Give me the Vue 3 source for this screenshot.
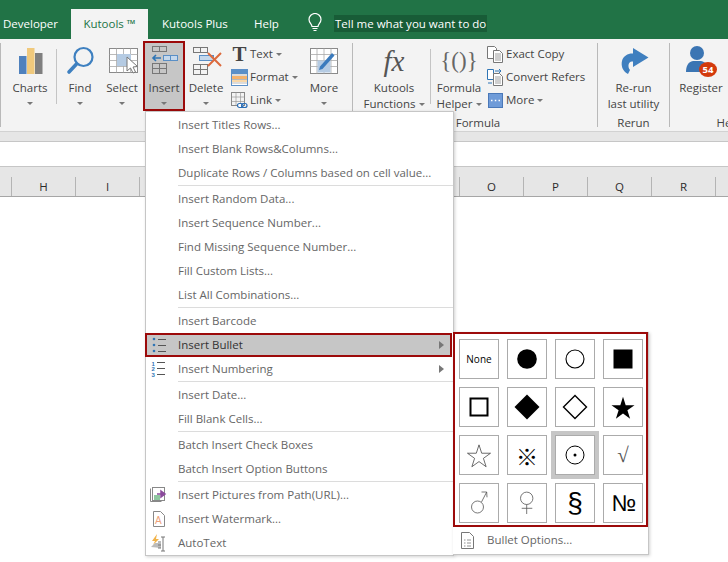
<template>
  <div class="page">
    <div class="titlebar">
      <span class="tab dev">Developer</span>
      <span class="tab active">Kutools ™</span>
      <span class="tab plus">Kutools Plus</span>
      <span class="tab help">Help</span>
      <svg class="bulb" width="16" height="20" viewBox="0 0 16 20" fill="none" stroke="#fff" stroke-width="1.2">
        <path d="M5 13.5C5 11 2 10 2 6.5a6 6 0 0 1 12 0C14 10 11 11 11 13.5z" />
        <path d="M5.5 15.5h5M6.5 17.5h3" />
      </svg>
      <span class="tell">Tell me what you want to do</span>
    </div>

    <div class="ribbon">
      <div class="group g-first">
        <div class="group-row">
          <div class="btn w-charts">
            <svg class="ic" width="26" height="30" viewBox="0 0 26 30">
              <rect x="2" y="11" width="7.5" height="18" fill="#4f81bd" />
              <rect x="10" y="3" width="7.5" height="26" fill="#f0c97c" />
              <rect x="18" y="8" width="7.5" height="21" fill="#7f7f7f" />
            </svg>
            <span class="lbl">Charts</span>
            <i class="caret"></i>
          </div>
          <div class="short-sep"></div>
          <div class="btn w-find">
            <svg class="ic" width="30" height="30" viewBox="0 0 30 30" fill="none">
              <circle cx="18.500" cy="12" r="9" stroke="#3e80c0" stroke-width="2.200" />
              <path d="M11.500 19 4 27" stroke="#3e80c0" stroke-width="3.600" stroke-linecap="round" />
            </svg>
            <span class="lbl">Find</span>
            <i class="caret"></i>
          </div>
          <div class="btn w-select">
            <svg class="ic" width="34" height="30" viewBox="0 0 34 30">
              <rect x="4.500" y="3.500" width="28" height="24" fill="#fff" stroke="#8a8a8a" />
              <path d="M4.500 9.500h28M4.500 15.500h28M4.500 21.500h28M11.500 3.500v24M18.500 3.500v24M25.500 3.500v24" stroke="#a8a8a8" stroke-width=".8" />
              <rect x="12" y="9" width="14" height="12" fill="#b5cbe3" />
              <path d="M22 12v14l3.500-3 2.500 5 2.500-1-2.500-5 4.500-.5z" fill="#fff" stroke="#777" />
            </svg>
            <span class="lbl">Select</span>
            <i class="caret"></i>
          </div>
          <div class="btn w-insert picked">
            <svg class="ic" width="30" height="30" viewBox="0 0 30 30" fill="none" stroke="#777">
              <rect x="3.500" y="1.500" width="14" height="5" />
              <path d="M10.500 1.500v5" />
              <rect x="14.500" y="10.500" width="14" height="5" stroke="#5a8fc6" fill="#c5d8ec" />
              <path d="M21.500 10.500v5" stroke="#5a8fc6" />
              <path d="M12 13H4M7 10l-3 3 3 3" stroke="#2f75b5" stroke-width="1.600" />
              <rect x="3.500" y="18.500" width="14" height="10" />
              <path d="M10.500 18.500v10M3.500 23.500h14" />
            </svg>
            <span class="lbl">Insert</span>
            <i class="caret"></i>
          </div>
          <div class="btn w-delete">
            <svg class="ic" width="32" height="30" viewBox="0 0 32 30" fill="none" stroke="#777">
              <rect x="3.500" y="2.500" width="14" height="5" />
              <path d="M10.500 2.500v5" />
              <rect x="9.500" y="10.500" width="14" height="5" stroke="#5a8fc6" fill="#c5d8ec" />
              <rect x="3.500" y="19.500" width="14" height="10" />
              <path d="M10.500 19.500v10M3.500 24.500h14" />
              <path d="M18 8l13 13M31 8 18 21" stroke="#dc6a3c" stroke-width="2" />
            </svg>
            <span class="lbl">Delete</span>
            <i class="caret"></i>
          </div>
          <div class="stack s-text">
            <div class="stack-row">
              <span class="t-icon">T</span>
              <span class="lbl">Text</span><i class="caret inline"></i>
            </div>
            <div class="stack-row">
              <svg class="sic" width="17" height="17" viewBox="0 0 17 17">
                <rect x=".5" y=".5" width="16" height="16" fill="#fff" stroke="#5b8fc7" />
                <rect x="1" y="1" width="15" height="4" fill="#5b8fc7" />
                <rect x="1" y="7" width="15" height="3" fill="#f5b26b" />
                <rect x="1" y="11" width="15" height="2" fill="#f8d7a8" />
                <path d="M1 6h15M1 10.500h15M1 14h15" stroke="#888" stroke-width=".6" />
              </svg>
              <span class="lbl">Format</span><i class="caret inline"></i>
            </div>
            <div class="stack-row">
              <svg class="sic" width="17" height="17" viewBox="0 0 17 17" fill="none">
                <rect x=".5" y=".5" width="13" height="13" stroke="#888" />
                <path d="M.5 5h13M.5 9.500h13M5 .5v13M9.500 .5v13" stroke="#999" stroke-width=".7" />
                <rect x="6.500" y="11.500" width="5.500" height="4" rx="2" stroke="#2a6db5" stroke-width="1.200" fill="#fff" />
                <rect x="10.500" y="11.500" width="5.500" height="4" rx="2" stroke="#2a6db5" stroke-width="1.200" />
              </svg>
              <span class="lbl">Link</span><i class="caret inline"></i>
            </div>
          </div>
          <div class="btn w-more">
            <svg class="ic" width="30" height="30" viewBox="0 0 30 30">
              <rect x="1.500" y="3.500" width="27" height="25" fill="#fff" stroke="#8a8a8a" />
              <path d="M1.500 9.500h27M1.500 15.500h27M1.500 21.500h27M8 3.500v25M15 3.500v25M22 3.500v25" stroke="#aaa" stroke-width=".8" />
              <rect x="8.500" y="15.500" width="13" height="12" fill="#b5cbe3" />
              <path d="M11 21.500 23 8l2.500 2.500L13.500 24l-3.500 1z" fill="#3a7abd" />
            </svg>
            <span class="lbl">More</span>
            <i class="caret"></i>
          </div>
        </div>
      </div>

      <div class="group g-formula">
        <div class="group-row">
          <div class="btn w-fx">
            <span class="fx">fx</span>
            <span class="lbl">Kutools</span>
            <span class="lbl">Functions<i class="caret inline"></i></span>
          </div>
          <div class="short-sep near"></div>
          <div class="btn w-helper">
            <span class="braces">{()}</span>
            <span class="lbl">Formula</span>
            <span class="lbl">Helper<i class="caret inline"></i></span>
          </div>
          <div class="stack s-copy">
            <div class="stack-row">
              <svg class="sic" width="17" height="17" viewBox="0 0 17 17" fill="#fff" stroke="#777">
                <path d="M.5.500h7l2 2v10h-9z" />
                <path d="M6.500 4.500h6l3 3v9h-9z" />
                <path d="M8 8h6M8 10h6M8 12h6M8 14h6" stroke-width=".7" />
              </svg>
              <span class="lbl">Exact Copy</span>
            </div>
            <div class="stack-row">
              <svg class="sic" width="17" height="17" viewBox="0 0 17 17" fill="#fff" stroke="#777">
                <path d="M.5.500h6v10h-6z" stroke="#2f75b5" />
                <path d="M6.500 4.500h6l3 3v9h-9z" />
                <path d="M8 8h6M8 10h6M8 12h6M8 14h6" stroke-width=".7" />
                <path d="M8 2h6M12 0l2 2-2 2M1 14h4" stroke="#2f75b5" fill="none" />
              </svg>
              <span class="lbl">Convert Refers</span>
            </div>
            <div class="stack-row">
              <svg class="sic dots" width="15" height="15" viewBox="0 0 15 15">
                <rect x=".5" y=".5" width="14" height="14" fill="#6f9bd8" stroke="#4a78b8" />
                <path d="M3 7.500h1.500M6.800 7.500h1.500M10.500 7.500H12" stroke="#fff" stroke-width="1.500" />
              </svg>
              <span class="lbl">More</span><i class="caret inline"></i>
            </div>
          </div>
        </div>
        <div class="group-label">Formula</div>
      </div>

      <div class="group g-rerun">
        <div class="group-row">
          <div class="btn w-rerun">
            <svg class="ic" width="30" height="30" viewBox="0 0 30 30">
              <path d="M14 3 29.500 12.500 14 22v-5.500h-1c-4 0-4.500 5.500-2 8.500l-2 4C3 26 2 20 3 16c1-5 6-7.500 10-7.500h1z" fill="#3f7fbf" />
            </svg>
            <span class="lbl">Re-run</span>
            <span class="lbl">last utility</span>
          </div>
        </div>
        <div class="group-label">Rerun</div>
      </div>

      <div class="group g-help">
        <div class="group-row">
          <div class="btn w-register">
            <div class="reg-icon">
              <svg width="26" height="28" viewBox="0 0 26 28">
                <circle cx="12" cy="8" r="7" fill="#3b75b3" />
                <path d="M1 27c0-6 2-10 7-11h8c5 1 7 5 7 11z" fill="#3b75b3" />
              </svg>
              <span class="badge">54</span>
            </div>
            <span class="lbl">Register</span>
          </div>
        </div>
        <div class="group-label">Help</div>
      </div>
    </div>

    <div class="formula-gap"></div>
    <div class="formula-line"></div>

    <div class="headers">
      <span v-for="(c, i) in columns" :key="i" class="col">{{ c }}</span>
    </div>

    <div class="menu">
      <template v-for="(item, i) in menuItems" :key="i">
        <div v-if="item.sep" class="menu-sep"></div>
        <div v-else class="menu-row" :class="{ hot: item.hot, second: item.arrow && !item.hot }">
          <span class="menu-ic">
            <svg v-if="item.icon === 'bullet'" width="16" height="16" viewBox="0 0 16 16">
              <circle cx="2" cy="2" r="1.300" fill="#2f75b5" />
              <circle cx="2" cy="8" r="1.300" fill="#2f75b5" />
              <circle cx="2" cy="14" r="1.300" fill="#2f75b5" />
              <path d="M6 2.500h8M6 8.500h8M6 14.500h8" stroke="#555" />
            </svg>
            <svg v-else-if="item.icon === 'number'" width="16" height="16" viewBox="0 0 16 16">
              <g fill="#2f75b5" font-family="Liberation Sans, sans-serif" font-size="6" font-weight="700">
                <text x=".5" y="4.500">1</text>
                <text x=".5" y="10.300">2</text>
                <text x=".5" y="15.800">3</text>
              </g>
              <path d="M6 1.500h8M6 7.500h8M6 13.500h8" stroke="#555" />
            </svg>
            <svg v-else-if="item.icon === 'pic'" width="18" height="16" viewBox="0 0 18 16" fill="none">
              <path d="M.5 1.500v13h11" stroke="#888" />
              <rect x="2.500" y=".5" width="12" height="13" fill="#fff" stroke="#888" />
              <rect x="4" y="8" width="6" height="5" fill="#8fc7a0" />
              <path d="M7 7h7M11 4l4 3-4 3z" stroke="#8b4a9c" fill="#8b4a9c" stroke-width="1.500" />
            </svg>
            <svg v-else-if="item.icon === 'mark'" width="14" height="16" viewBox="0 0 14 16" fill="none">
              <path d="M1.500.5h7l4 4v11h-11z" fill="#fff" stroke="#888" />
              <text x="3" y="13" fill="#eea27a" font-family="Liberation Sans, sans-serif" font-size="10">A</text>
            </svg>
            <svg v-else-if="item.icon === 'auto'" width="18" height="18" viewBox="0 0 18 18" fill="none">
              <path d="M7 0 2 7h3L3 11l6-6H6z" fill="#f1b34a" />
              <path d="M1 13 5 9h6v5z" fill="#bbb" />
              <path d="M13 3v14M11 3h4M11 17h4M8 8h3M8 11h3M8 14h3" stroke="#777" />
            </svg>
          </span>
          <span class="menu-text">{{ item.text }}</span>
          <i v-if="item.arrow" class="sub-arrow"></i>
        </div>
      </template>
    </div>

    <div class="submenu">
      <div class="symbols">
        <div v-for="s in symbols" :key="s.id" class="cell" :class="{ on: s.id === 'dot' }">
          <span v-if="s.text" :class="s.cls">{{ s.text }}</span>
          <svg v-else width="36" height="36" viewBox="0 0 36 36" v-html="s.svg"></svg>
        </div>
      </div>
      <div class="sub-foot">
        <svg width="13" height="17" viewBox="0 0 13 17" fill="none" stroke="#777">
          <path d="M.5.500h8l4 4v12H.5z" fill="#fff" />
          <path d="M3 8h1.500M6 8h4M3 11h1.500M6 11h4M3 14h1.500M6 14h4" stroke-width=".8" />
        </svg>
        <span class="foot-text">Bullet Options...</span>
      </div>
    </div>
  </div>
</template>

<script setup>
// J to N lie behind the open menu
const columns = ['', 'H', 'I', '', '', '', '', '', 'O', 'P', 'Q', 'R']

const menuItems = [
  { text: 'Insert Titles Rows...' },
  { text: 'Insert Blank Rows&Columns...' },
  { text: 'Duplicate Rows / Columns based on cell value...' },
  { sep: true },
  { text: 'Insert Random Data...' },
  { text: 'Insert Sequence Number...' },
  { text: 'Find Missing Sequence Number...' },
  { text: 'Fill Custom Lists...' },
  { text: 'List All Combinations...' },
  { sep: true },
  { text: 'Insert Barcode' },
  { text: 'Insert Bullet', icon: 'bullet', arrow: true, hot: true },
  { text: 'Insert Numbering', icon: 'number', arrow: true },
  { sep: true },
  { text: 'Insert Date...' },
  { text: 'Fill Blank Cells...' },
  { sep: true },
  { text: 'Batch Insert Check Boxes' },
  { text: 'Batch Insert Option Buttons' },
  { sep: true },
  { text: 'Insert Pictures from Path(URL)...', icon: 'pic' },
  { text: 'Insert Watermark...', icon: 'mark' },
  { text: 'AutoText', icon: 'auto' },
]

const starPath = 'M18 6.500l3 9.300h9.800l-7.900 5.700 3 9.300-7.900-5.700-7.900 5.700 3-9.300-7.900-5.700H15z'

const symbols = [
  { id: 'none', text: 'None', cls: 'sym-none' },
  { id: 'disc', svg: '<circle cx="18" cy="18" r="9.800" fill="#000"/>' },
  { id: 'circle', svg: '<circle cx="18" cy="18" r="9" fill="none" stroke="#000" stroke-width="1.100"/>' },
  { id: 'square', svg: '<rect x="8.500" y="8.500" width="19" height="19" fill="#000"/>' },
  { id: 'box', svg: '<rect x="9.500" y="9.500" width="17" height="17" fill="none" stroke="#000" stroke-width="2"/>' },
  { id: 'diamond', svg: '<path d="M18 5.500 30.500 18 18 30.500 5.500 18z" fill="#000"/>' },
  { id: 'lozenge', svg: '<path d="M18 6.500 29.500 18 18 29.500 6.500 18z" fill="none" stroke="#000" stroke-width="1.400"/>' },
  { id: 'star', svg: `<path transform="translate(1.800 2) scale(.9)" d="${starPath}" fill="#000"/>` },
  { id: 'star-o', svg: `<path transform="translate(1.800 2) scale(.9)" d="${starPath}" fill="none" stroke="#333" stroke-width=".8"/>` },
  { id: 'ref', text: '※', cls: 'sym-ref' },
  { id: 'dot', svg: '<circle cx="18" cy="18" r="9" fill="none" stroke="#000" stroke-width="1"/><circle cx="18" cy="18" r="1.500" fill="#000"/>' },
  { id: 'root', text: '√', cls: 'sym-root' },
  { id: 'male', svg: '<circle cx="16.500" cy="22" r="6" fill="none" stroke="#555" stroke-width=".8"/><path d="M20.500 17 25.700 7M20.500 7h5.200l.3 5.300" fill="none" stroke="#555" stroke-width=".8"/>' },
  { id: 'female', svg: '<circle cx="17.700" cy="13.300" r="6.200" fill="none" stroke="#555" stroke-width=".8"/><path d="M17.700 19.500V29M12.700 23.300h10.600" fill="none" stroke="#555" stroke-width=".8"/>' },
  { id: 'section', text: '§', cls: 'sym-sec' },
  { id: 'numero', text: '№', cls: 'sym-num' },
]
</script>

<style>
html, body {
  margin: 0;
  background: #fff;
  overflow: hidden;
}
</style>

<style scoped>
.page {
  position: relative;
  width: 728px;
  height: 562px;
  overflow: hidden;
  background: #fff;
  font-family: "Open Sans", "Noto Sans", sans-serif;
  font-size: 11.5px;
  color: #444;
}

/* title bar */
.titlebar {
  height: 39px;
  background: #217346;
  display: flex;
  align-items: flex-end;
  color: #fff;
  font-size: 11.5px;
}
.tab {
  height: 30px;
  line-height: 30px;
  box-sizing: border-box;
}
.dev { width: 71px; padding-left: 3px; }
.active {
  width: 77px;
  background: #f3f3f3;
  color: #217346;
  text-align: center;
}
.plus { margin-left: 14px; width: 92px; }
.help { width: 53px; }
.bulb { margin-bottom: 6px; }
.tell {
  margin: 0 0 7px 11px;
  padding: 0 1px;
  height: 17px;
  line-height: 17px;
  background: #185c37;
}

/* ribbon */
.ribbon {
  height: 92px;
  background: #f3f3f3;
  border-bottom: 1px solid #d2d2d2;
  display: flex;
}
.group {
  flex: none;
  display: flex;
  flex-direction: column;
  box-sizing: border-box;
  height: 84px;
  margin-top: 4px;
  border-right: 1px solid #b9b9b9;
}
.g-first { width: 353px; border-left: 1px solid #b9b9b9; padding-left: 7px; }
.g-formula { width: 245px; padding-left: 6px; }
.g-rerun { width: 72px; }
.g-help { width: 118px; border-right: 0; }
.group-row {
  flex: none;
  height: 72px;
  display: flex;
}
.group-label {
  flex: none;
  text-align: center;
  line-height: 16px;
  color: #444;
}
.btn {
  flex: none;
  display: flex;
  flex-direction: column;
  align-items: center;
  box-sizing: border-box;
  height: 70px;
  margin-top: -2px;
  line-height: 16px;
  color: #444;
}
.ic { flex: none; margin: 4px 0 5px; height: 30px; }
.lbl { white-space: nowrap; }
.w-charts { width: 44px; }
.w-find { width: 40px; margin-left: 3px; }
.w-select { width: 42px; margin-left: 1px; }
.w-insert { width: 42px; }
.w-delete { width: 40px; margin-left: 1px; }
.w-more { width: 40px; }
.w-fx { width: 70px; }
.w-helper { width: 52px; margin-left: 2px; }
.w-rerun { width: 71px; }
.w-register { width: 62px; }
.picked {
  background: #c6c6c6;
  border: 2px solid #9c0a0a;
}
.picked .ic { margin: 2px 0 5px; }
.short-sep {
  flex: none;
  width: 1px;
  height: 55px;
  margin: 6px 0 0 4px;
  background: #c4c4c4;
}
.short-sep.near { margin-left: 1px; }
.caret {
  width: 0;
  height: 0;
  margin-top: 6px;
  border: 3px solid transparent;
  border-top: 3.5px solid #777;
  border-bottom: 0;
}
.caret.inline {
  display: inline-block;
  margin: 0 0 2px 3px;
}
.stack {
  flex: none;
  display: flex;
  flex-direction: column;
  gap: 5px;
  padding-top: 2px;
}
.s-text { width: 73px; margin-left: 5px; }
.s-copy { margin-left: 2px; }
.stack-row {
  height: 18px;
  display: flex;
  align-items: center;
  gap: 2px;
}
.stack-row .lbl { margin-top: -2px; }
.stack-row .caret.inline { margin: 0 0 0 1px; }
.sic { flex: none; }
.sic.dots { margin: 0 1px; }
.t-icon {
  width: 17px;
  text-align: center;
  font: bold 21px/18px "Liberation Serif", serif;
  color: #444;
}
.fx {
  height: 38px;
  margin-top: 1px;
  font: italic 29px/38px "Liberation Serif", serif;
  color: #555;
}
.braces {
  height: 39px;
  font: 23px/39px "Liberation Serif", serif;
  color: #666;
}
.reg-icon {
  position: relative;
  width: 32px;
  height: 36px;
  margin-top: 3px;
}
.reg-icon svg { position: absolute; left: 0; top: 1px; }
.badge {
  position: absolute;
  left: 14px;
  top: 18px;
  width: 18px;
  height: 15px;
  line-height: 15px;
  border-radius: 50%;
  background: #d33a0c;
  color: #fff;
  font-size: 9.5px;
  font-weight: 700;
  text-align: center;
}

/* formula bar and headers */
.formula-gap {
  height: 9px;
  background: #e6e6e6;
  border-bottom: 1px solid #c6c6c6;
}
.formula-line {
  height: 24px;
  background: #fff;
  border-bottom: 1px solid #c6c6c6;
}
.headers {
  height: 29px;
  background: #e6e6e6;
  border-bottom: 1px solid #a6a6a6;
  display: flex;
  align-items: flex-end;
}
.col {
  flex: none;
  width: 64px;
  height: 19px;
  line-height: 20px;
  box-sizing: border-box;
  border-right: 1px solid #b4b4b4;
  text-align: center;
  color: #2b2b2b;
}
.col:first-child { width: 12px; }

/* insert menu */
.menu {
  position: absolute;
  left: 145px;
  top: 111px;
  z-index: 2;
  width: 309px;
  height: 445px;
  box-sizing: border-box;
  padding-top: 1px;
  background: #fff;
  border: 1px solid #c6c6c6;
  box-shadow: 1px 1px 3px rgba(0, 0, 0, .18);
}
.menu-row {
  height: 24px;
  display: flex;
  align-items: center;
  box-sizing: border-box;
  color: #666;
}
.menu-ic {
  flex: none;
  width: 32px;
  display: flex;
  justify-content: center;
  padding-right: 6px;
  box-sizing: border-box;
}
.menu-text { white-space: nowrap; margin-top: -2px; }
.hot {
  margin: 0 1px 0 -1px;
  background: #c6c6c6;
  border: 2px solid #9c0a0a;
  color: #333;
}
.hot .menu-ic { width: 31px; }
.sub-arrow {
  margin-left: auto;
  margin-right: 6px;
  width: 0;
  height: 0;
  border: 4px solid transparent;
  border-left: 5px solid #777;
  border-right: 0;
}
.second .sub-arrow { margin-right: 9px; }
.menu-sep {
  height: 2px;
  margin-left: 32px;
  box-sizing: border-box;
  border-top: 1px solid #dcdcdc;
}

/* bullet submenu */
.submenu {
  position: absolute;
  left: 453px;
  top: 332px;
  z-index: 3;
  width: 196px;
  height: 223px;
  box-sizing: border-box;
  background: #fff;
  border-right: 1px solid #c6c6c6;
  border-bottom: 1px solid #c6c6c6;
  box-shadow: 1px 1px 3px rgba(0, 0, 0, .18);
}
.symbols {
  width: 195px;
  height: 195px;
  box-sizing: border-box;
  padding: 5px 0 0 4px;
  border: 2px solid #9c0a0a;
  display: grid;
  grid-template-columns: repeat(4, 40px);
  grid-auto-rows: 40px;
  gap: 8px;
}
.cell {
  display: flex;
  align-items: center;
  justify-content: center;
  box-sizing: border-box;
  border: 1px solid #ababab;
  background: #fff;
}
.cell.on { outline: 4px solid #c6c6c6; }
.cell svg { flex: none; }
.sym-none { font: 10px "Open Sans", sans-serif; color: #000; }
.sym-ref { font: 22px "Noto Sans CJK JP", sans-serif; color: #000; }
.sym-root { font: 21px "Liberation Serif", serif; color: #555; }
.sym-sec { font: 28px "Liberation Sans", sans-serif; color: #000; }
.sym-num { font: 23px "Liberation Sans", sans-serif; color: #000; letter-spacing: -1.5px; }
.sub-foot {
  height: 27px;
  display: flex;
  align-items: center;
  padding-left: 8px;
}
.foot-text { margin: -2px 0 0 13px; color: #666; }
</style>
